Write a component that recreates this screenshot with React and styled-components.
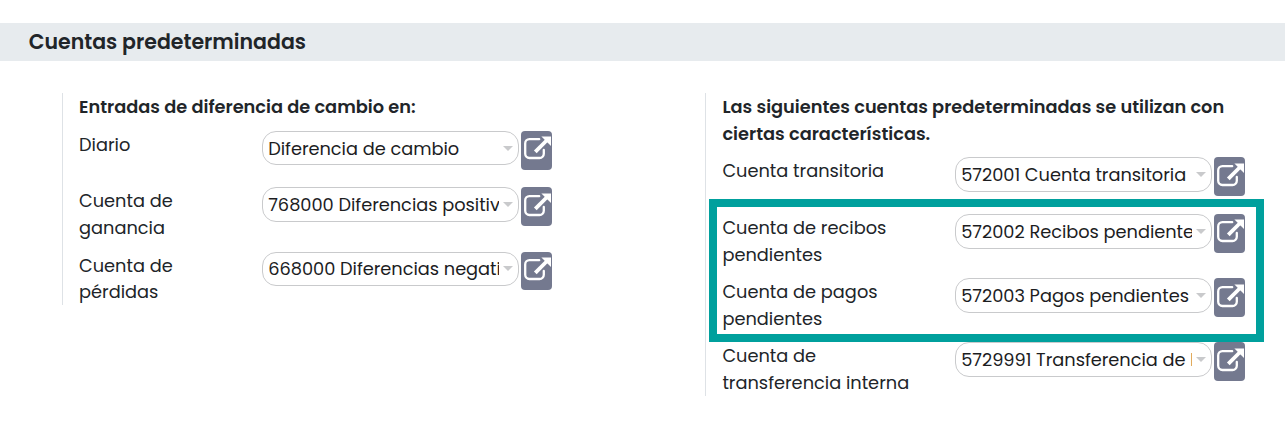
import React from 'react';
import styled, { createGlobalStyle } from 'styled-components';

const GlobalStyle = createGlobalStyle`
  body {
    margin: 0;
    background: #fff;
    color: #212529;
    font: 400 17.77px/26.7px Poppins, Inter, "Liberation Sans", sans-serif;
    font-feature-settings: "cv11";
  }
  * { box-sizing: border-box; }
`;

const Page = styled.main`
  padding-top: 23px;
  height: 423px;
  overflow: hidden;
`;

const SectionTitle = styled.h2`
  margin: 0;
  height: 38px;
  padding-left: 28.7px;
  background: #e7ebee;
  font-size: 20.5px;
  font-weight: 600;
  line-height: 38.6px;
`;

const Columns = styled.div`
  display: grid;
  grid-template-columns: 643px 1fr;
  align-items: start;
  padding: 32.1px 0 0 62px;
`;

const Column = styled.section`
  position: relative;
  border-left: 1px solid #dee2e6;
  padding: 1.05px 0 0 ${p => p.$indent}px;
`;

const Heading = styled.h3`
  margin: 0 0 ${p => p.$gap}px;
  font-size: 17.75px;
  font-weight: 600;
`;

const TextLine = styled.span`
  display: block;
  white-space: nowrap;
`;

const Rows = styled.div`
  display: flex;
  flex-direction: column;
  gap: 10.85px;
`;

const Row = styled.div`
  display: grid;
  grid-template-columns: ${p => p.$labelWidth}px 257px 31px;
  column-gap: 0;
  align-items: start;
  min-height: 45.75px;
`;

const Label = styled.label`
  display: block;
  padding-top: 1.1px;
  margin-bottom: -1.1px;
`;

const Select = styled.div`
  display: flex;
  align-items: center;
  height: 34.65px;
  border: 1px solid #c9cacc;
  border-radius: 14px;
  padding-left: 5.2px;
  background: #fff;
  color: #1c1d1f;
`;

const Value = styled.span`
  width: 230.8px;
  padding-top: 1.7px;
  overflow: hidden;
  white-space: nowrap;
  letter-spacing: -0.02px;
`;

const Caret = styled.span`
  margin-left: 4px;
  border: 5px solid transparent;
  border-top-color: #c9cacc;
  border-bottom: 0;
`;

const OpenButton = styled.button`
  display: block;
  width: 31px;
  height: 38.8px;
  margin-left: 2px;
  padding: 0;
  border: 0;
  border-radius: 4px;
  background: #74798f;
  svg { display: block; }
`;

const Highlight = styled.div`
  position: absolute;
  left: 3px;
  top: 105.9px;
  width: 555px;
  height: 143px;
  border: 8px solid #00a09d;
  pointer-events: none;
`;

const OpenIcon = () => (
  <svg width="31" height="38" viewBox="0 0 31 38" fill="none">
    <path d="M18.2 8.2H8.4a4.2 4.2 0 0 0-4.2 4.2v10.4a4.2 4.2 0 0 0 4.2 4.2h10.2a4.2 4.2 0 0 0 4.2-4.2V19" stroke="#fff" strokeWidth="2.3" strokeLinecap="round" />
    <path d="M14.3 20.8 25.6 9.5" stroke="#fff" strokeWidth="3.8" />
    <path d="M20.4 5.5h9.6v9.6z" fill="#fff" />
  </svg>
);

const columns = [
  {
    labelWidth: 183,
    indent: 16,
    gap: 9.9,
    heading: ['Entradas de diferencia de cambio en:'],
    rows: [
      { label: ['Diario'], value: 'Diferencia de cambio' },
      { label: ['Cuenta de', 'ganancia'], value: '768000 Diferencias positiv' },
      { label: ['Cuenta de', 'pérdidas'], value: '668000 Diferencias negati' },
    ],
  },
  {
    labelWidth: 232.6,
    indent: 16.4,
    gap: 9.75,
    highlighted: true,
    heading: ['Las siguientes cuentas predeterminadas se utilizan con', 'ciertas características.'],
    rows: [
      { label: ['Cuenta transitoria'], value: '572001 Cuenta transitoria' },
      { label: ['Cuenta de recibos', 'pendientes'], value: '572002 Recibos pendiente' },
      { label: ['Cuenta de pagos', 'pendientes'], value: '572003 Pagos pendientes' },
      { label: ['Cuenta de', 'transferencia interna'], value: '5729991 Transferencia de l' },
    ],
  },
];

const Lines = ({ items }) => items.map(text => <TextLine key={text}>{text}</TextLine>);

export default function App() {
  return (
    <Page>
      <GlobalStyle />
      <SectionTitle>Cuentas predeterminadas</SectionTitle>
      <Columns>
        {columns.map(column => (
          <Column key={column.labelWidth} $indent={column.indent}>
            <Heading $gap={column.gap}><Lines items={column.heading} /></Heading>
            <Rows>
              {column.rows.map(row => (
                <Row key={row.value} $labelWidth={column.labelWidth}>
                  <Label><Lines items={row.label} /></Label>
                  <Select>
                    <Value>{row.value}</Value>
                    <Caret />
                  </Select>
                  <OpenButton aria-label="Abrir"><OpenIcon /></OpenButton>
                </Row>
              ))}
            </Rows>
            {column.highlighted && <Highlight />}
          </Column>
        ))}
      </Columns>
    </Page>
  );
}
